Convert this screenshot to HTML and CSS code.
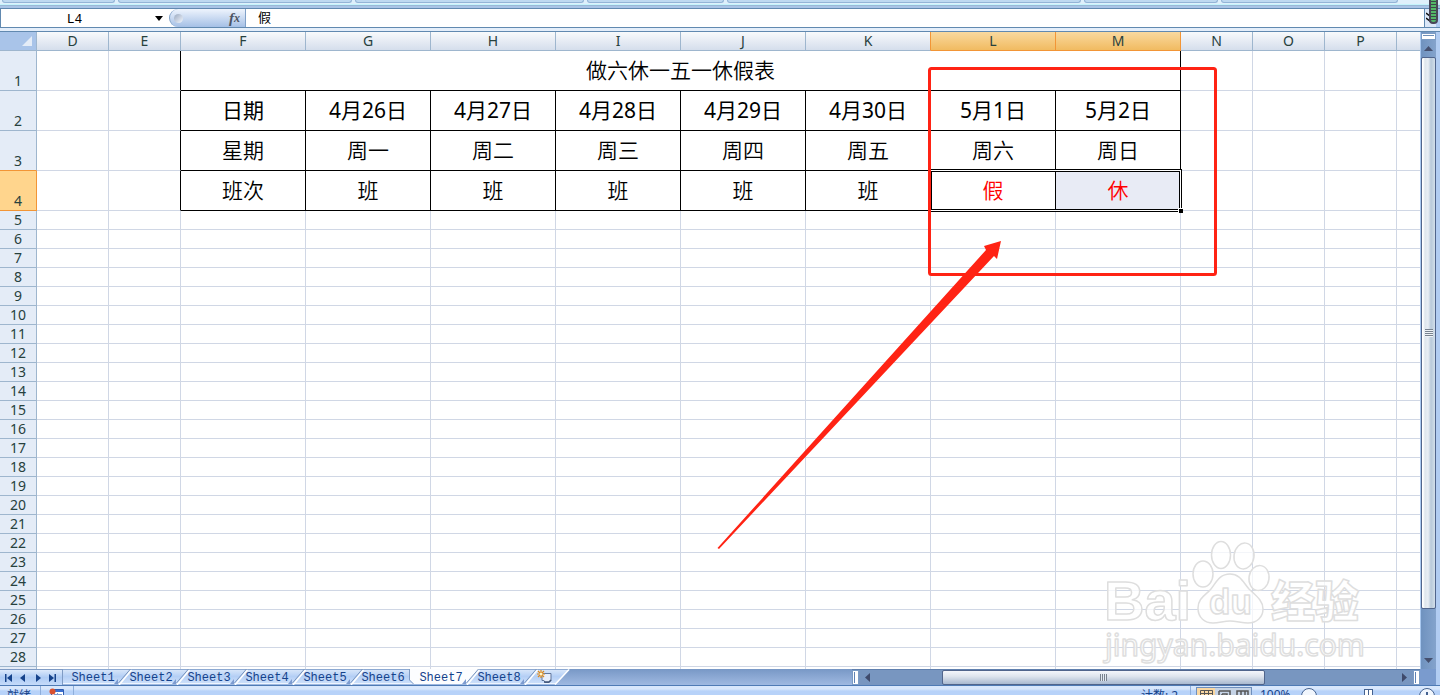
FILE: index.html
```html
<!DOCTYPE html>
<html lang="zh-CN">
<head>
<meta charset="utf-8">
<title>Sheet7</title>
<link rel="stylesheet" href="styles.css">
</head>
<body>
<div class="ribbon">
  <span class="group g1"></span><span class="group g2"></span><span class="group g3"></span><span class="group g4"></span><span class="group g5"></span><span class="group g6"></span><span class="group g7"></span>
  <span class="gauge"></span>
</div>
<div class="formula-bar">
  <div class="name-box">
    <input class="name-input" type="text" value="L4" aria-label="名称框">
    <button class="name-drop" aria-label="展开名称框"><svg width="8" height="5"><path d="M0 0h8L4 5z"/></svg></button>
  </div>
  <div class="fx-pill">
    <span class="knob"></span>
    <button class="fx" aria-label="插入函数"><i>f</i><i class="fx-x">x</i></button>
  </div>
  <input class="formula-input" type="text" value="假" aria-label="编辑栏">
  <button class="expand" aria-label="展开编辑栏"><svg width="9" height="12" viewBox="0 0 9 12" fill="none" stroke="#111" stroke-width="1.5"><path d="M0 1l4 3 4-3M0 6l4 3 4-3"/></svg></button>
  <span class="formula-end"></span>
</div>
<div class="gap-line"></div>

<main class="work">
  <div class="sheet">
    <table class="grid">
      <colgroup><col class="c-head"><col class="c-std"><col class="c-std"><col class="c-wide"><col class="c-wide"><col class="c-wide"><col class="c-wide"><col class="c-wide"><col class="c-wide"><col class="c-wide"><col class="c-wide"><col class="c-std"><col class="c-std"><col class="c-std"><col></colgroup>
      <thead>
        <tr><th class="corner"><svg class="corner-mark" width="10" height="10"><path d="M10 0v10H0z"/></svg></th><th>D</th><th>E</th><th>F</th><th>G</th><th>H</th><th>I</th><th>J</th><th class="pre">K</th><th class="on">L</th><th class="on">M</th><th>N</th><th>O</th><th>P</th><th class="last"></th></tr>
      </thead>
      <tbody id="rows">
        <tr class="tall"><th>1</th><td></td><td class="edge"></td><td class="b" colspan="8">做六休一五一休假表</td><td></td><td></td><td></td><td class="last"></td></tr>
        <tr class="tall dates"><th>2</th><td></td><td class="edge"></td><td class="b">日期</td><td class="b">4月26日</td><td class="b">4月27日</td><td class="b">4月28日</td><td class="b">4月29日</td><td class="b">4月30日</td><td class="b">5月1日</td><td class="b">5月2日</td><td></td><td></td><td></td><td class="last"></td></tr>
        <tr class="tall pre-row"><th>3</th><td></td><td class="edge"></td><td class="b">星期</td><td class="b">周一</td><td class="b">周二</td><td class="b">周三</td><td class="b">周四</td><td class="b">周五</td><td class="b">周六</td><td class="b">周日</td><td></td><td></td><td></td><td class="last"></td></tr>
        <tr class="tall active-row"><th>4</th><td></td><td class="edge"></td><td class="b">班次</td><td class="b">班</td><td class="b">班</td><td class="b">班</td><td class="b">班</td><td class="b">班</td><td class="b red anchor">假<span class="selection"><span class="handle"></span></span></td><td class="b red shaded">休</td><td></td><td></td><td></td><td class="last"></td></tr>
      </tbody>
    </table>

    <svg class="watermark" width="270" height="130" viewBox="0 0 270 130">
      <g class="wm">
        <text class="wm-bai" x="4" y="81">Bai</text>
        <ellipse cx="103" cy="35" rx="10" ry="13"/>
        <ellipse cx="121" cy="16" rx="9.5" ry="13.5"/>
        <ellipse cx="144" cy="17" rx="10" ry="13" transform="rotate(8 144 17)"/>
        <ellipse cx="159" cy="39" rx="10" ry="12.5" transform="rotate(8 159 39)"/>
        <path d="M130 35c-11 0-14 9-19 15-5 6-13 9-13 19 0 10 7 15 15 15 6 0 11-2 17-2s12 2 18 2c9 0 15-6 15-14 0-9-8-14-14-20-6-7-9-15-19-15z"/>
        <text class="wm-du" x="109" y="75">du</text>
        <text class="wm-cn" x="171" y="79">经验</text>
        <text class="wm-url" x="5" y="117">jingyan.baidu.com</text>
      </g>
    </svg>
    <svg class="marks" width="1420" height="637" viewBox="0 0 1420 637">
      <rect x="929.5" y="36.5" width="286" height="206" rx="2" fill="none" stroke="#ff2314" stroke-width="3"/>
      <path d="M717.500 516L986 218l-2-4 17-5-4 18-3-3L719 517z" fill="#ff2314"/>
    </svg>
  </div>
  <div class="vscroll">
    <div class="track">
      <span class="vsplit"></span>
      <button class="varrow" aria-label="向上滚动"><svg width="9" height="5"><path d="M0 5h9L4.500 0z"/></svg></button>
      <div class="vthumb"><span class="vgrip"></span></div>
      <span class="vspace"></span>
      <button class="varrow down" aria-label="向下滚动"><svg width="9" height="5"><path d="M0 0h9L4.500 5z"/></svg></button>
    </div>
  </div>
</main>

<div class="bottom-bar">
  <div class="nav">
    <button aria-label="第一张"><svg width="8" height="8"><path d="M0 0h1.500v8H0zM7 0v8L2 4z"/></svg></button>
    <button aria-label="上一张"><svg width="8" height="8"><path d="M6 0v8L1 4z"/></svg></button>
    <button aria-label="下一张"><svg width="8" height="8"><path d="M2 0v8l5-4z"/></svg></button>
    <button aria-label="最后一张"><svg width="8" height="8"><path d="M1 0v8l5-4zM6.500 0H8v8H6.500z"/></svg></button>
  </div>
  <div class="tabs">
    <svg class="tab-shapes" width="508" height="16" viewBox="0 0 508 16">
      <defs>
        <linearGradient id="tg" x1="0" y1="0" x2="0" y2="1"><stop offset="0" stop-color="#dbe8fa"/><stop offset=".5" stop-color="#b4cff5"/><stop offset="1" stop-color="#cfe1fb"/></linearGradient>
        <g id="slash"><path d="M-3 16L9.500 1" stroke="#fff" stroke-width="1.500"/><path d="M-4 14.500L8.500 0" stroke="#7894bd"/><path d="M-8 15h4v-5z" fill="#7c9bd0"/></g>
      </defs>
      <path d="M0 0h507L493 15H0z" fill="url(#tg)"/>
      <path d="M0 14.500h493" stroke="#eef5ff"/>
      <path d="M0 .5h507" stroke="#8ca9d2"/>
      <path d="M347 0h69L403 15H351l-4-4z" fill="#fcfdff"/>
      <path d="M346.500 0v11l4 4" stroke="#7f9bc4" fill="none"/>
      <g fill="none">
        <use href="#slash" x="59"/><use href="#slash" x="117"/><use href="#slash" x="175"/><use href="#slash" x="233"/><use href="#slash" x="291"/><use href="#slash" x="407"/><use href="#slash" x="465"/>
      </g>
      <path d="M492 15.500L506 .5" stroke="#fff" stroke-width="1.500"/>
    </svg>
    <button class="tab">Sheet1</button><button class="tab">Sheet2</button><button class="tab">Sheet3</button><button class="tab">Sheet4</button><button class="tab">Sheet5</button><button class="tab">Sheet6</button><button class="tab">Sheet7</button><button class="tab">Sheet8</button>
    <button class="tab new" aria-label="插入工作表"><svg width="16" height="14" viewBox="0 0 16 14"><path d="M5 3.500h9v7l-2 2H8l-1-2H5z" fill="#e7eefb" stroke="#60779d"/><path d="M7 12h5l2-2" stroke="#3d5377" fill="none" stroke-width="1.500"/><path d="M4 0v8M0 4h8M1 1l6 6M7 1L1 7" stroke="#de8a1c" stroke-width="1.200"/><circle cx="4" cy="4" r="1.500" fill="#fff5c9"/></svg></button>
  </div>
  <div class="filler"></div>
  <div class="hscroll">
    <span class="hsplit"></span>
    <button class="harrow" aria-label="向左滚动"><svg width="5" height="9"><path d="M5 0v9L0 4.500z"/></svg></button>
    <span class="hspace"></span>
    <div class="hthumb"><span class="hgrip"></span></div>
    <span class="hrest"></span>
    <button class="harrow" aria-label="向右滚动"><svg width="5" height="9"><path d="M0 0v9l5-4.500z"/></svg></button>
    <span class="hsplit"></span>
  </div>
  <div class="size-corner"></div>
</div>

<footer class="status">
  <span class="ready">就绪</span>
  <span class="macro"><svg width="16" height="16" viewBox="0 0 16 16"><path d="M2.500 1.500h12v12h-12z" fill="#fff" stroke="#2f5cb0"/><path d="M3 2h11v2H3z" fill="#3c6fd0"/><path d="M5 6.500h8M5 9.500h8M8.500 5v8" stroke="#7c9bd0"/><circle cx="3.500" cy="3.500" r="3" fill="#d9502f"/></svg></span>
  <span class="status-space"></span>
  <span class="count">计数: 2</span>
  <div class="views">
    <button class="view chosen" aria-label="普通"><svg width="13" height="10" fill="none" stroke="#555" stroke-width="1"><path d="M.5.5h12v9H.5zM.5 3.500h12M4.500.5v9M8.500.5v9"/></svg></button>
    <button class="view" aria-label="页面布局"><svg width="13" height="10" fill="none" stroke="#555" stroke-width="1.500"><path d="M1 1h11v9M1 1v9M4 4h5v6M4 4v6"/></svg></button>
    <button class="view" aria-label="分页预览"><svg width="13" height="10" fill="none" stroke="#555" stroke-width="1.500"><path d="M1 1h11v8H1zM5 1v8M9 1v8"/></svg></button>
  </div>
  <span class="percent">100%</span>
  <button class="round" aria-label="缩小"><svg width="8" height="8" stroke="#44618f" stroke-width="2"><path d="M0 4h8"/></svg></button>
  <span class="slide"><span class="slide-thumb"></span></span>
  <button class="round" aria-label="放大"><svg width="8" height="8" stroke="#44618f" stroke-width="2"><path d="M0 4h8M4 0v8"/></svg></button>
</footer>
<script src="rows.js"></script>
</body>
</html>
```
FILE: rows.js
```js
// Appends the empty rows below the schedule.
const body = document.getElementById("rows");
for (let n = 5; n <= 29; n++) {
  const row = body.insertRow();
  const head = document.createElement("th");
  if (n < 29) head.textContent = n;
  row.append(head);
  for (let c = 0; c < 14; c++) row.insertCell();
  row.lastElementChild.className = "last";
}
```
FILE: styles.css
```css
* { box-sizing: border-box; }
body {
  margin: 0;
  height: 100vh;
  display: flex;
  flex-direction: column;
  overflow: hidden;
  background: #b9d1f2;
  font-family: "Noto Sans", "Noto Sans CJK SC", sans-serif;
}
button { margin: 0; padding: 0; border: 0; background: none; font: inherit; color: inherit; display: flex; align-items: center; justify-content: center; flex: none; }
input { margin: 0; padding: 0; border: 0; outline: 0; background: none; color: #000; }
svg { display: block; flex: none; }

/* ribbon edge */
.ribbon {
  position: relative;
  flex: none;
  height: 8px;
  padding: 0 42px 0 2px;
  display: flex;
  align-items: flex-start;
  gap: 3px;
  background: linear-gradient(#dff0fb 0 4px, #c4f4fc 4px 5px, #9ab8d6 5px 6px, #a9c4e6 6px);
}
.group { height: 3px; background: #bed9f0; border: 1px solid #93b4d6; border-top: 0; border-radius: 0 0 3px 3px; }
.g1 { flex: 112; } .g2 { flex: 235; } .g3 { flex: 230; } .g4 { flex: 136; } .g5 { flex: 356; } .g6 { flex: 134; } .g7 { flex: 177; }
.gauge {
  position: absolute;
  z-index: 2;
  right: 2px;
  top: -4px;
  width: 9px;
  height: 28px;
  border: 2px solid #4a4658;
  border-radius: 4px;
  background: repeating-linear-gradient(#3c4a48 0 1px, #54b768 1px 3px);
}

/* formula bar */
.formula-bar { flex: none; height: 20px; display: flex; background: #fff; border: solid #6189b0; border-width: 1px 0; }
.name-box { width: 169px; display: flex; border-left: 1px solid #6189b0; }
.name-input { flex: 1; min-width: 0; padding-top: 3px; text-align: center; font: 13px/15px "Liberation Mono", monospace; }
.name-drop { width: 21px; }
.fx-pill {
  width: 77px;
  display: flex;
  align-items: center;
  justify-content: space-between;
  padding: 0 5px 0 4px;
  border: 1px solid #7fa0c8;
  border-width: 0 1px;
  border-radius: 9px 0 0 9px;
  background: linear-gradient(#eef4fd, #a5c0e6);
}
.knob { width: 9px; height: 9px; border-radius: 50%; background: linear-gradient(135deg, #9aa9bf, #f4f8ff); }
.fx { font: bold italic 15px/16px "Liberation Serif", serif; color: #4d5563; }
.fx-x { font-size: 12px; }
.formula-input { flex: 1; min-width: 0; padding: 2px 0 0 12px; font: 13px/16px "Liberation Mono", "Noto Sans CJK SC", monospace; }
.expand { width: 12px; border-left: 1px solid #6189b0; background: #dce8f8; }
.formula-end { width: 4px; background: #b1ccf2; }
.gap-line { flex: none; height: 4px; background: #e4eefa; border-bottom: 1px solid #6189b0; }

/* worksheet */
.work { flex: 1; min-height: 0; display: flex; }
.sheet { position: relative; flex: 1; min-width: 0; overflow: hidden; background: #fff; }
.grid { width: 100%; table-layout: fixed; border-collapse: separate; border-spacing: 0; }
.c-head { width: 37px; } .c-std { width: 72px; } .c-wide { width: 125px; }
.grid th, .grid td { height: 19px; padding: 0; border: solid #d0d7e5; border-width: 0 1px 1px 0; }
.grid th { font-size: 14px; line-height: 18px; font-weight: 400; color: #27413e; border-color: #9eb6ce; vertical-align: bottom; background: #e4ecf7; }
.grid thead th { background: linear-gradient(#f8fafc, #d5deec); }
.grid thead .corner { background: #a9c4e9; }
.corner-mark { margin: 0 4px 4px auto; fill: #e4ecf7; }
.grid thead .pre { border-right-color: #f29536; }
.grid thead .on { background: linear-gradient(#f9d99f, #f1bb61); border-color: #f29536; }
.pre-row th { border-bottom-color: #f29536; }
.grid .active-row th { background: #ffd58d; border-color: #f29536; }
.grid .tall td, .grid .tall th { height: 40px; }
.tall td { font-size: 21px; line-height: 31px; font-weight: 350; text-align: center; vertical-align: middle; }
.dates td { font-weight: 400; }
.grid .b { border-color: #000; }
.grid .edge { border-right-color: #000; }
.grid .last { border-right: 0; }
.red { color: #f00; }
.shaded { background: #e8ebf5; }
.anchor { position: relative; }
.selection {
  position: absolute;
  z-index: 1;
  left: -2px;
  top: -2px;
  bottom: -2px;
  width: calc(200% + 5px);
  border: 1px solid #000;
  box-shadow: inset 0 0 0 1px #fff, inset 0 0 0 2px #000;
}
.handle { position: absolute; right: -2px; bottom: -2px; width: 5px; height: 5px; background: #000; border: solid #fff; border-width: 1px 0 0 1px; }
.marks { position: absolute; z-index: 3; left: 0; top: 0; }

.watermark { position: absolute; z-index: 2; right: 50px; bottom: 0; }
.wm { fill: #fff; fill-opacity: .75; stroke: #dedede; stroke-width: 1.5; stroke-linejoin: round; }
.wm-bai { font: bold 56px "Liberation Sans", sans-serif; }
.wm-du { font: bold 35px "Liberation Sans", sans-serif; }
.wm-cn { font: 900 44px "Noto Sans CJK SC", sans-serif; }
.wm-url { font: 30px "Noto Sans", sans-serif; }

/* vertical scroll bar */
.vscroll { width: 20px; display: flex; background: #b1ccf2; }
.track { width: 16px; display: flex; flex-direction: column; padding-left: 1px; background: linear-gradient(90deg, #a9c8ef 0 1px, #6f92bf 1px, #84a3cc); }
.vsplit { height: 7px; margin-top: 1px; border: 2px solid #fff; outline: 1px solid #7a9bc4; outline-offset: -1px; background: linear-gradient(#6f8fb8 0 1px, #fff 1px); }
.varrow { height: 17px; fill: #45506f; }
.varrow.down { height: 18px; }
.vthumb { flex: 552; display: flex; align-items: center; justify-content: center; border: 1px solid #51658c; border-radius: 2px; background: linear-gradient(90deg, #fff 0 1px, #dde5ec 3px, #e9eef4 6px, #b8c9da 9px, #d3dfea); }
.vgrip { width: 8px; height: 8px; background: repeating-linear-gradient(#78828f 0 1px, #eef2f6 1px 2px); }
.vspace { flex: 42; }

/* tabs and horizontal scroll bar */
.bottom-bar { flex: none; height: 17px; display: flex; border-bottom: 1px solid #4f7bb5; background: #a9c6f0; }
.nav { width: 63px; display: flex; align-items: center; justify-content: space-between; padding: 0 6px 0 5px; border: 1px solid #7f9bc4; border-width: 1px 1px 0 0; background: linear-gradient(#dce9fb, #aecbf4 50%, #c5dbfa); }
.nav button { fill: #15428b; height: 15px; }
.tabs { position: relative; width: 508px; display: flex; background: linear-gradient(#7898c6, #9fb9e1); }
.tab-shapes { position: absolute; left: 0; top: 0; }
.tab { position: relative; width: 58px; height: 16px; padding: 2px 0 0 2px; font: 12px/14px "Liberation Mono", monospace; color: #15428b; }
.tab.new { width: 34px; padding: 0 0 0 2px; }
.filler { flex: 281; background: linear-gradient(#7898c6, #9fb9e1); }
.hscroll { flex: 568; display: flex; border-top: 1px solid #5f7fae; background: #7896c0; }
.hsplit { flex: none; width: 7px; border: 2px solid #fff; outline: 1px solid #7a9bc4; outline-offset: -1px; background: linear-gradient(90deg, #5f83b5 0 1px, #fff 1px); }
.harrow { width: 17px; fill: #3f4a6b; }
.hspace { flex: 66; }
.hthumb { flex: 322; display: flex; align-items: center; justify-content: center; border: 1px solid #51658c; border-radius: 2px; background: linear-gradient(#f4f6fb, #dfe5ee 40%, #a9b9d0); }
.hgrip { width: 7px; height: 7px; background: repeating-linear-gradient(90deg, #78828f 0 1px, #e4eaf2 1px 2px); }
.hrest { flex: 132; }
.size-corner { width: 20px; background: linear-gradient(90deg, #7a9bce 16px, #b1ccf2 16px); }

/* status bar, cut by the window edge */
.status { flex: none; height: 9px; overflow: hidden; display: flex; align-items: flex-start; padding-right: 5px; font-size: 12px; line-height: 16px; color: #15428b; background: linear-gradient(#d8e7fc 0 3px, #b7d2f9 5px); }
.ready { width: 41px; padding: 2px 0 0 7px; border-right: 1px solid #8eaedb; }
.macro { width: 33px; padding: 2px 0 0 8px; border-right: 1px solid #8eaedb; }
.status-space { flex: 1; }
.count { width: 50px; padding-top: 2px; border-right: 1px solid #8eaedb; }
.views { display: flex; margin: 1px 8px 0 5px; border: 1px solid #6f8fbd; }
.view { width: 18px; height: 16px; padding-top: 2px; align-items: flex-start; background: #c5d3e6; }
.view.chosen { background: #f9d7a2; }
.percent { width: 41px; padding-top: 1px; }
.round { width: 16px; height: 16px; margin-top: 2px; border: 1px solid #44618f; border-radius: 50%; background: #f1f6fd; }
.slide { width: 102px; display: flex; justify-content: center; padding-top: 3px; }
.slide-thumb { width: 9px; height: 14px; border: 1px solid #44618f; background: linear-gradient(90deg, #fff 3px, #44618f 3px 4px, #fff 4px); }
```
